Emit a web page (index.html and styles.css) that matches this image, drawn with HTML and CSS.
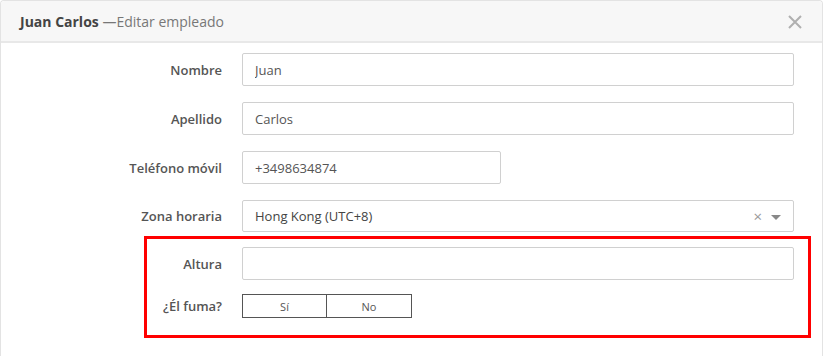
FILE: index.html
```html
<!DOCTYPE html>
<html lang="es">
<head>
  <meta charset="UTF-8" />
  <title>Editar empleado</title>
  <link rel="stylesheet" href="styles.css">
</head>
<body>
<div class="modal">
  <div class="modal-header">
    <h2><strong>Juan Carlos</strong> <span>—Editar empleado</span></h2>
    <button class="cerrar" type="button" aria-label="Cerrar">
      <svg width="14" height="14" viewBox="0 0 14 14"><path d="M1 1L13 13M13 1L1 13" stroke="#b0b0b0" stroke-width="2" fill="none"/></svg>
    </button>
  </div>

  <form class="modal-body">
    <div class="fila">
      <label for="nombre">Nombre</label>
      <input type="text" id="nombre" value="Juan">
    </div>
    <div class="fila">
      <label for="apellido">Apellido</label>
      <input type="text" id="apellido" value="Carlos">
    </div>
    <div class="fila">
      <label for="telefono">Teléfono móvil</label>
      <input type="text" id="telefono" class="corto" value="+3498634874">
    </div>
    <div class="fila">
      <label>Zona horaria</label>
      <div class="selector">
        <span>Hong Kong (UTC+8)</span>
        <span class="limpiar">×</span>
        <span class="flecha"></span>
      </div>
    </div>

    <div class="destacado">
      <div class="fila">
        <label for="altura">Altura</label>
        <input type="text" id="altura">
      </div>
      <div class="fila">
        <label>¿Él fuma?</label>
        <div class="opciones">
          <button type="button">Sí</button>
          <button type="button">No</button>
        </div>
      </div>
    </div>
  </form>
</div>
</body>
</html>
```

FILE: styles.css
```css
body {
  margin: 0;
  font-family: 'Open Sans', 'Liberation Sans', sans-serif;
  color: #555;
  background: white;
}
.modal {
  width: 821px;
  border: 1px solid #e3e3e3;
  border-bottom: none;
  border-radius: 4px 4px 0 0;
  min-height: 360px;
}
.modal-header {
  height: 40px;
  background: #f7f7f7;
  border-bottom: 2px solid #e8e8e8;
  border-radius: 4px 4px 0 0;
  display: flex;
  align-items: center;
  justify-content: space-between;
  padding: 0 20px 0 19px;
}
.modal-header h2 {
  margin: 0;
  font-size: 14px;
  font-weight: normal;
  color: #777;
}
.modal-header strong {
  color: #444;
  font-weight: 700;
}
.cerrar {
  background: none;
  border: none;
  padding: 0;
  margin-top: 2px;
  display: flex;
}
.modal-body {
  padding: 10px 28px 0 19px;
}
.fila {
  display: grid;
  grid-template-columns: 202px 1fr;
  column-gap: 20px;
  align-items: center;
  margin-bottom: 16px;
}
label {
  text-align: right;
  font-size: 13px;
  font-weight: 600;
  color: #555;
}
input[type="text"] {
  height: 33px;
  box-sizing: border-box;
  border: 1px solid #d0d0d0;
  border-radius: 2px;
  padding: 0 12px;
  font-family: inherit;
  font-size: 13px;
  color: #555;
  width: 100%;
}
input.corto {
  width: 259px;
}
.selector {
  height: 32px;
  box-sizing: border-box;
  border: 1px solid #d0d0d0;
  border-radius: 2px;
  padding: 0 12px;
  font-size: 13px;
  color: #444;
  display: flex;
  align-items: center;
}
.selector span:first-child {
  flex-grow: 1;
}
.limpiar {
  color: #999;
  font-size: 15px;
  margin-right: 9px;
}
.flecha {
  width: 0;
  height: 0;
  border-left: 5px solid transparent;
  border-right: 5px solid transparent;
  border-top: 5px solid #888;
  margin-top: 2px;
}
.destacado {
  border: 3px solid #f00;
  margin: -12px -17px 0 124px;
  padding: 8px 14px 3px 0;
}
.destacado .fila {
  grid-template-columns: 75px 1fr;
  margin-bottom: 14px;
}
.opciones {
  display: flex;
}
.opciones button {
  height: 24px;
  width: 85px;
  background: white;
  border: 1px solid #555;
  font-family: inherit;
  font-size: 11px;
  color: #555;
}
.opciones button + button {
  border-left: none;
}
```
